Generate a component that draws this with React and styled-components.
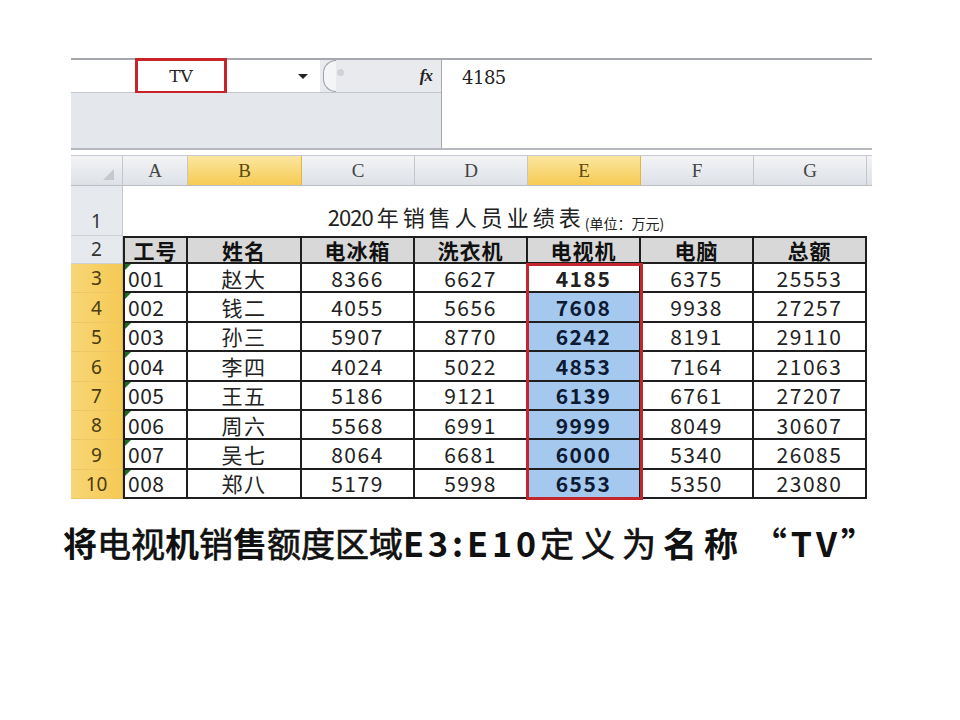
import React from 'react';
import styled, { createGlobalStyle, css } from 'styled-components';

const GlobalStyle = createGlobalStyle`
  body {
    margin: 0;
    background: #ffffff;
    font-family: "Noto Sans", "Noto Sans CJK SC", sans-serif;
  }
`;

const cjk = `"Noto Sans CJK SC", "Noto Sans", sans-serif`;

const rows = [
  ['001', '赵大', 8366, 6627, 4185, 6375, 25553],
  ['002', '钱二', 4055, 5656, 7608, 9938, 27257],
  ['003', '孙三', 5907, 8770, 6242, 8191, 29110],
  ['004', '李四', 4024, 5022, 4853, 7164, 21063],
  ['005', '王五', 5186, 9121, 6139, 6761, 27207],
  ['006', '周六', 5568, 6991, 9999, 8049, 30607],
  ['007', '吴七', 8064, 6681, 6000, 5340, 26085],
  ['008', '郑八', 5179, 5998, 6553, 5350, 23080],
];

const letters = ['A', 'B', 'C', 'D', 'E', 'F', 'G'];
const heads = ['工号', '姓名', '电冰箱', '洗衣机', '电视机', '电脑', '总额'];

const Page = styled.div`
  padding-top: 58px;
`;

const Workbook = styled.div`
  margin-left: 71px;
  width: 801px;
`;

/* ---------- formula bar ---------- */

const FormulaBar = styled.div`
  display: grid;
  grid-template-columns: 370px 1fr;
  height: 92px;
  border-top: 2px solid #a4a8ae;
  border-bottom: 2px solid #b4b8be;
  box-sizing: border-box;
`;

const LeftPane = styled.div`
  display: flex;
  flex-direction: column;
  background: #e4e7eb;
`;

const NameRow = styled.div`
  display: flex;
  height: 32px;
  border-bottom: 1px solid #c3c7cc;
`;

const NameBox = styled.div`
  width: 249px;
  display: flex;
  align-items: flex-start;
  background: #ffffff;
`;

const NameInput = styled.div`
  margin: -2px 0 0 64px;
  width: 92px;
  height: 36px;
  box-sizing: border-box;
  border: 3px solid #c8232b;
  display: flex;
  align-items: center;
  justify-content: center;
  font-family: "DejaVu Serif", "Liberation Serif", serif;
  font-size: 17px;
  color: #222;
`;

const Arrow = styled.div`
  margin: 14px 12px 0 auto;
  width: 0;
  height: 0;
  border-left: 5px solid transparent;
  border-right: 5px solid transparent;
  border-top: 5px solid #222;
`;

const FxArea = styled.div`
  flex: 1;
  display: flex;
  align-items: center;
  padding-right: 9px;
  background: #e8eaee;
`;

const Arc = styled.div`
  width: 12px;
  height: 30px;
  margin-left: 3px;
  border: 1px solid #9aa0a8;
  border-right: none;
  border-radius: 16px 0 0 16px;
  background: #f4f5f7;
`;

const Dot = styled.div`
  width: 7px;
  height: 7px;
  margin-left: 1px;
  margin-bottom: 8px;
  border-radius: 50%;
  background: #cfd3d8;
`;

const Fx = styled.span`
  margin-left: auto;
  font-family: "Liberation Serif", serif;
  font-style: italic;
  font-weight: 700;
  font-size: 17px;
  color: #222;
  letter-spacing: -1px;
`;

const GrayFill = styled.div`
  flex: 1;
  background: #e4e7eb;
`;

const FormulaText = styled.div`
  background: #ffffff;
  border-left: 1px solid #a3a8ae;
  padding: 7px 20px;
  font-family: "DejaVu Serif", "Liberation Serif", serif;
  font-size: 18px;
  letter-spacing: -0.5px;
  color: #222;
`;

/* ---------- sheet ---------- */

const Sheet = styled.div`
  position: relative;
  margin-top: 5px;
  display: grid;
  grid-template-columns: 52px 65px 114px 113px 113px 113px 113px 113px 1fr;
  grid-template-rows: 30px 50px 28px repeat(8, 29.375px);
  border-top: 1px solid #c6cad0;
`;

const Corner = styled.div`
  position: relative;
  background: linear-gradient(#f3f4f6, #dde1e6);
  border-right: 1px solid #c3c7cd;
  border-bottom: 1px solid #b9bec5;
  &::after {
    content: '';
    position: absolute;
    right: 8px;
    bottom: 5px;
    border-left: 11px solid transparent;
    border-bottom: 11px solid #c5c9ce;
  }
`;

const ColHead = styled.div`
  display: flex;
  align-items: center;
  justify-content: center;
  font-family: "Liberation Serif", serif;
  font-size: 19px;
  color: #444;
  border-right: 1px solid #c3c7cd;
  border-bottom: 1px solid #b9bec5;
  background: linear-gradient(#f3f4f6, #dde1e6);
  ${(p) =>
    p.$active &&
    css`
      background: linear-gradient(#fbe6a0, #f6cb52);
      border-right-color: #e2b548;
      color: #5a4a10;
    `}
`;

const RowHead = styled.div`
  display: flex;
  align-items: flex-end;
  justify-content: center;
  padding-bottom: 1px;
  font-family: "Noto Sans", sans-serif;
  font-size: 19px;
  line-height: 26px;
  color: #333;
  background: #e6e9ed;
  border-right: 1px solid #c3c7cd;
  border-bottom: 1px solid #cdd1d6;
  ${(p) =>
    p.$active &&
    css`
      background: linear-gradient(90deg, #f8d677, #f5c955);
      border-bottom-color: #efc663;
      border-right-color: #e2b548;
      color: #4a3c10;
    `}
`;

const TitleCell = styled.div`
  grid-column: 2 / 9;
  display: flex;
  align-items: baseline;
  justify-content: center;
  padding: 14px 0 0 2px;
  font-family: ${cjk};
  font-size: 22px;
  letter-spacing: 4px;
  color: #222;
`;

const Year = styled.span`
  letter-spacing: -1px;
  margin-right: 4px;
`;

const Unit = styled.span`
  font-size: 14px;
  letter-spacing: 0;
  position: relative;
  top: 3px;
`;

const Spare = styled.div`
  background: ${(p) => (p.$head ? 'linear-gradient(#f3f4f6, #dde1e6)' : '#ffffff')};
  border-bottom: ${(p) => (p.$head ? '1px solid #b9bec5' : 'none')};
`;

const HeadCell = styled.div`
  display: flex;
  align-items: center;
  justify-content: center;
  background: #d8d8d8;
  border-top: 2px solid #1e1e1e;
  border-right: 2px solid #1e1e1e;
  border-bottom: 2px solid #1e1e1e;
  ${(p) => p.$first && 'border-left: 2px solid #1e1e1e;'}
  font-family: ${cjk};
  font-weight: 700;
  font-size: 21px;
  letter-spacing: 1px;
  color: #111;
`;

const Cell = styled.div`
  position: relative;
  display: flex;
  align-items: center;
  justify-content: ${(p) => (p.$left ? 'flex-start' : 'center')};
  padding-left: ${(p) => (p.$left ? '3px' : '0')};
  background: ${(p) => (p.$sel ? '#a5c8ee' : '#ffffff')};
  border-right: 2px solid #1e1e1e;
  border-bottom: 2px solid #1e1e1e;
  ${(p) => p.$left && 'border-left: 2px solid #1e1e1e;'}
  font-family: ${cjk};
  font-size: 21px;
  font-weight: ${(p) => (p.$bold ? 700 : 400)};
  letter-spacing: ${(p) => (p.$left ? '0.5px' : '1.5px')};
  color: ${(p) => (p.$sel ? '#0d1a33' : '#222')};
  ${(p) =>
    p.$left &&
    css`
      &::before {
        content: '';
        position: absolute;
        left: 0;
        top: 0;
        border-top: 6px solid #1f6b1f;
        border-right: 6px solid transparent;
      }
    `}
`;

const Selection = styled.div`
  position: absolute;
  left: 455px;
  top: 107px;
  width: 117px;
  height: 237px;
  box-sizing: border-box;
  border: 3px solid #c4262e;
  pointer-events: none;
`;

const Caption = styled.div`
  margin-top: 24px;
  padding-left: 63px;
  font-family: ${cjk};
  font-size: 34px;
  line-height: 40px;
  color: #111;
  font-weight: 400;
  -webkit-text-stroke: 0.7px #111;
  white-space: nowrap;
  b {
    font-weight: 700;
    -webkit-text-stroke: 0;
  }
`;

const Part = styled.span`
  letter-spacing: ${(p) => p.$spacing}px;
`;

export default function App() {
  return (
    <>
      <GlobalStyle />
      <Page>
        <Workbook>
          <FormulaBar>
            <LeftPane>
              <NameRow>
                <NameBox>
                  <NameInput>TV</NameInput>
                  <Arrow />
                </NameBox>
                <FxArea>
                  <Arc />
                  <Dot />
                  <Fx>fx</Fx>
                </FxArea>
              </NameRow>
              <GrayFill />
            </LeftPane>
            <FormulaText>4185</FormulaText>
          </FormulaBar>

          <Sheet>
            <Corner />
            {letters.map((l) => (
              <ColHead key={l} $active={l === 'B' || l === 'E'}>
                {l}
              </ColHead>
            ))}
            <Spare $head />

            <RowHead>1</RowHead>
            <TitleCell>
              <Year>2020</Year>年销售人员业绩表<Unit>(单位：万元)</Unit>
            </TitleCell>
            <Spare />

            <RowHead>2</RowHead>
            {heads.map((h, i) => (
              <HeadCell key={h} $first={i === 0}>
                {h}
              </HeadCell>
            ))}
            <Spare />

            {rows.map((r, ri) => (
              <React.Fragment key={r[0]}>
                <RowHead $active>{ri + 3}</RowHead>
                {r.map((v, ci) => (
                  <Cell
                    key={ci}
                    $left={ci === 0}
                    $bold={ci === 4}
                    $sel={ci === 4 && ri > 0}
                  >
                    {v}
                  </Cell>
                ))}
                <Spare />
              </React.Fragment>
            ))}

            <Selection />
          </Sheet>
        </Workbook>

        <Caption>
          <Part $spacing={0}>
            <b>将</b>电视<b>机</b>销<b>售</b>额度区域
          </Part>
          <Part $spacing={4}>
            <b>E3:E10</b>
          </Part>
          <Part $spacing={7}>
            定义为<b>名称</b>
          </Part>{' '}
          <Part $spacing={4}>
            <b>“TV”</b>
          </Part>
        </Caption>
      </Page>
    </>
  );
}
